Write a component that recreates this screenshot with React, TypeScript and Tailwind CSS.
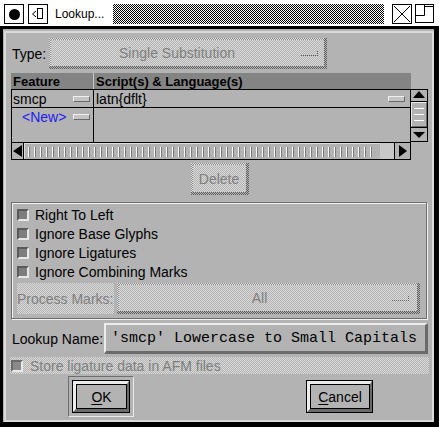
import React from "react";

// stipple patterns used for the disabled widgets
const FACE = "bg-[image:repeating-conic-gradient(#d9d9d9_0%_25%,#b3b3b3_0%_50%)] bg-[length:2px_2px]";
const EDGE = "bg-[image:repeating-conic-gradient(#8c8c8c_0%_25%,#e2e2e2_0%_50%)] bg-[length:2px_2px]";
const DARK = "bg-[image:repeating-conic-gradient(#5e5e5e_0%_25%,#b3b3b3_0%_50%)] bg-[length:2px_2px]";
const CHECKER = "bg-[image:repeating-conic-gradient(#000_0%_25%,#fff_0%_50%)] bg-[length:2px_2px]";

function Stip({ className = "", children }: { className?: string; children?: React.ReactNode }) {
  return (
    <div className={`${DARK} pr-[3px] pb-[3px] ${className}`}>
      <div className={`${EDGE} pt-[2px] pl-[2px] h-full`}>
        <div className={`${FACE} h-full flex items-center`}>{children}</div>
      </div>
    </div>
  );
}

function Mark() {
  return <div className="w-[17px] h-[5px] border-b border-r border-dotted border-[#5e5e5e]" />;
}

function CellButton() {
  return (
    <div className="w-[17px] h-[6px] bg-[#c4c4c4] border border-t-[#f0f0f0] border-l-[#f0f0f0] border-r-[#6a6a6a] border-b-[#6a6a6a]" />
  );
}

function Check({ label, disabled = false }: { label: string; disabled?: boolean }) {
  return (
    <div className="flex items-center h-[19px] gap-[6px]">
      <div className="w-[12px] h-[12px] border-2 border-t-[#5a5a5a] border-l-[#5a5a5a] border-r-[#e8e8e8] border-b-[#e8e8e8] bg-[#7e7e7e]" />
      <span className={disabled ? "text-[#7f7f7f]" : ""}>{label}</span>
    </div>
  );
}

function Button({ children, w }: { children: React.ReactNode; w: string }) {
  return (
    <div className={`${w} h-[33px] border border-black`}>
      <div className="h-full border-t-[3px] border-l-[3px] border-r-2 border-b-[3px] border-t-[#ececec] border-l-[#ececec] border-r-[#6a6a6a] border-b-[#6a6a6a]">
        <div className="h-full border border-black flex items-center justify-center">{children}</div>
      </div>
    </div>
  );
}

function TitleBar() {
  return (
    <div className="h-[26px] bg-white flex pt-[4px] pl-[4px] pr-[5px]">
      <div className="w-[20px] h-[20px] border border-black flex items-center justify-center">
        <div className="w-[11px] h-[11px] rounded-full bg-black" />
      </div>
      <div className="w-[20px] h-[20px] border border-black ml-[4px]">
        <svg width="18" height="18" viewBox="0 0 18 18" fill="none" stroke="#000" strokeWidth="1">
          <polyline points="7,6 3.5,9 7,12" />
          <rect x="8.5" y="3.5" width="5" height="10" />
        </svg>
      </div>
      <div className="w-[58px] ml-[7px] h-[20px] flex items-center text-[12px]">Lookup...</div>
      <div className={`flex-1 h-[20px] ${CHECKER}`} />
      <div className="w-[20px] h-[20px] border border-black ml-[8px]">
        <svg width="18" height="18" viewBox="0 0 18 18" stroke="#000" strokeWidth="1">
          <line x1="1" y1="1" x2="17" y2="17" />
          <line x1="17" y1="1" x2="1" y2="17" />
        </svg>
      </div>
      <div className="w-[19px] h-[19px] border border-black ml-[3px]">
        <svg width="17" height="17" viewBox="0 0 17 17" fill="none" stroke="#000" strokeWidth="1">
          <path d="M8.5 0 V10.5 H0" />
          <path d="M8.5 1.5 H17" />
        </svg>
      </div>
    </div>
  );
}

export default function App() {
  const ticks = Array.from({ length: 58 });
  return (
    <div className="w-[439px] h-[427px] bg-black overflow-hidden font-['Liberation_Sans',Arial,sans-serif] text-[14px] text-black leading-none">
      <TitleBar />
      <div className="h-[3px]" />
      <div className="ml-[3px] w-[431px] h-[393px] bg-[#b3b3b3] pl-px pt-[2px]">
        <div className="h-full border-2 border-[#dadada] pl-[5px] pr-[4px] pt-[5px] flex flex-col">
          {/* Type */}
          <div className="flex items-center h-[31px]">
            <span className="w-[38px] pl-px">Type:</span>
            <Stip className="w-[278px] h-[31px]">
              <span className="flex-1 text-center text-[#808080] pl-[2px]">Single Substitution</span>
              <div className="mr-[6px]"><Mark /></div>
            </Stip>
          </div>

          {/* Feature table */}
          <div className="mt-[4px] w-[400px] h-[16px] bg-[#848484] flex text-[13px] font-bold">
            <div className="w-[83px] border-r border-[#c8c8c8] pl-[2px] flex items-center">Feature</div>
            <div className="flex-1 pl-[2px] flex items-center">Script(s) &amp; Language(s)</div>
          </div>
          <div className="flex">
            <div className="w-[400px] h-[54px] border border-black flex">
              <div className="w-[82px] border-r border-black flex flex-col">
                <div className="h-[18px] border-b border-black flex items-center pl-px">
                  <span className="flex-1">smcp</span>
                  <div className="mr-[3px]"><CellButton /></div>
                </div>
                <div className="h-[18px] flex items-center pl-[10px]">
                  <span className="flex-1 text-[#1c1cf0]">&lt;New&gt;</span>
                  <div className="mr-[3px]"><CellButton /></div>
                </div>
              </div>
              <div className="flex-1 flex flex-col">
                <div className="h-[18px] border-b border-black flex items-center pl-[2px]">
                  <span className="flex-1">latn{"{dflt}"}</span>
                  <div className="mr-[5px]"><CellButton /></div>
                </div>
              </div>
            </div>
            <div className="w-[17px] h-[53px] border-t border-r border-b border-black flex flex-col">
              <div className="h-[12px] border-b border-black flex items-start justify-center pt-px">
                <svg width="12" height="7" viewBox="0 0 12 7"><polygon points="6,0 12,7 0,7" fill="#000" /></svg>
              </div>
              <div className="h-[26px] border-b border-black">
                <div className="h-full border border-t-[#ececec] border-l-[#ececec] border-r-[#6a6a6a] border-b-[#6a6a6a] flex flex-col justify-center gap-[5px] px-[2px]">
                  <div className="h-px bg-white" />
                  <div className="h-px bg-white" />
                  <div className="h-px bg-white" />
                </div>
              </div>
              <div className="flex-1 flex items-center justify-center">
                <svg width="12" height="6" viewBox="0 0 12 6"><polygon points="0,0 12,0 6,6" fill="#000" /></svg>
              </div>
            </div>
          </div>
          <div className="-mt-px w-[400px] h-[18px] border border-black flex">
            <div className="w-[12px] border-r border-black flex items-center justify-center">
              <svg width="9" height="12" viewBox="0 0 9 12"><polygon points="0,6 9,0 9,12" fill="#000" /></svg>
            </div>
            <div className="w-[356px] flex items-center pl-[3px] gap-[4px] border-t border-l border-t-[#dcdcdc] border-l-[#dcdcdc]">
              {ticks.map((_, i) => (
                <div key={i} className="w-[2px] h-[10px] bg-white border-r border-[#7a7a7a]" />
              ))}
            </div>
            <div className="w-[15px] bg-[#c8c8c8] border-r border-black" />
            <div className="flex-1 flex items-center justify-center">
              <svg width="8" height="12" viewBox="0 0 8 12"><polygon points="8,6 0,0 0,12" fill="#000" /></svg>
            </div>
          </div>

          {/* Delete */}
          <Stip className="mt-[3px] self-center w-[58px] h-[32px]">
            <span className="flex-1 text-center text-[#808080]">Delete</span>
          </Stip>

          {/* Flags group */}
          <div className="mt-[7px] w-[416px] h-[117px] border border-[#6e6e6e] shadow-[1px_1px_0_#f2f2f2,inset_1px_1px_0_#f2f2f2] pl-[5px] pt-[2px] flex flex-col">
            <Check label="Right To Left" />
            <Check label="Ignore Base Glyphs" />
            <Check label="Ignore Ligatures" />
            <Check label="Ignore Combining Marks" />
            <div className="mt-[2px] h-[31px] flex gap-[3px]">
              <div className={`${FACE} w-[97px] flex items-center text-[#808080]`}>Process Marks:</div>
              <Stip className="w-[303px]">
                <span className="flex-1 text-center text-[#808080] pl-[8px]">All</span>
                <div className="mr-[8px]"><Mark /></div>
              </Stip>
            </div>
          </div>

          {/* Lookup name */}
          <div className="mt-[4px] flex h-[31px]">
            <span className="w-[93px] pl-px flex items-center">Lookup Name:</span>
            <div className="w-[324px] border-t-2 border-l-2 border-r-[3px] border-b-[3px] border-t-[#ececec] border-l-[#ececec] border-r-[#6a6a6a] border-b-[#6a6a6a] flex items-center pl-[5px] font-['Liberation_Mono','Courier_New',monospace] text-[15px] whitespace-pre">
              'smcp' Lowercase to Small Capitals
            </div>
          </div>

          {/* AFM */}
          <div className={`mt-[3px] -ml-px w-[419px] h-[17px] ${FACE} flex items-center pl-px gap-[7px]`}>
            <div className="w-[12px] h-[12px] border-2 border-t-[#6a6a6a] border-l-[#6a6a6a] border-r-[#e8e8e8] border-b-[#e8e8e8] bg-[#8a8a8a]" />
            <span className="text-[#7f7f7f]">Store ligature data in AFM files</span>
          </div>

          {/* OK / Cancel */}
          <div className="mt-[2px] h-[41px] flex items-center justify-between pl-[57px] pr-[55px]">
            <div className="w-[66px] h-[41px] border border-t-[#6e6e6e] border-l-[#6e6e6e] border-r-[#ececec] border-b-[#ececec] p-[3px]">
              <Button w="w-[58px]">
                <span><span className="underline underline-offset-2">O</span>K</span>
              </Button>
            </div>
            <Button w="w-[67px]">
              <span><span className="underline underline-offset-2">C</span>ancel</span>
            </Button>
          </div>
        </div>
      </div>
    </div>
  );
}
